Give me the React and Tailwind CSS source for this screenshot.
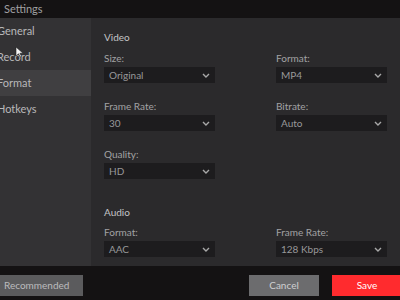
import React from "react";

function Chevron() {
  return (
    <svg width="8" height="5" viewBox="0 0 8 5" className="shrink-0">
      <path d="M1 1 L4 4 L7 1" fill="none" stroke="#a8a8a8" strokeWidth="1.4" />
    </svg>
  );
}

function Field({ label, value }) {
  return (
    <div className="flex flex-col">
      <div className="h-[12px] leading-[12px] text-[10px] text-[#a2a2a4]">{label}</div>
      <div className="mt-[3px] h-[16px] bg-[#1d1c1e] flex items-center justify-between pl-[5px] pr-[5px]">
        <span className="text-[10px] leading-[16px] text-[#98989a]">{value}</span>
        <Chevron />
      </div>
    </div>
  );
}

export default function App() {
  const items = ["General", "Record", "Format", "Hotkeys"];
  return (
    <div
      className="relative w-[400px] h-[300px] overflow-hidden bg-[#141213] flex flex-col"
      style={{ fontFamily: 'Lato, "Noto Sans", sans-serif' }}
    >
      <div className="h-[18px] shrink-0 flex items-center pl-[4px] text-[11px] text-[#a0a0a2]">
        Settings
      </div>
      <div className="h-[248px] shrink-0 flex">
        <div className="w-[91px] shrink-0 bg-[#333234] flex flex-col">
          {items.map((it) => (
            <div
              key={it}
              className={
                "h-[26px] flex items-center -ml-[3px] text-[11px] text-[#b8b8ba] " +
                (it === "Format" ? "bg-[#403f41]" : "")
              }
            >
              {it}
            </div>
          ))}
        </div>
        <div className="flex-1 bg-[#2b2a2c] pl-[13px] pr-[12px] pt-[12px] flex flex-col">
          <div className="h-[14px] leading-[14px] text-[10px] text-[#c4c4c6]">Video</div>
          <div className="mt-[8px] grid grid-cols-[111px_111px] gap-x-[61px] gap-y-[17px]">
            <Field label="Size:" value="Original" />
            <Field label="Format:" value="MP4" />
            <Field label="Frame Rate:" value="30" />
            <Field label="Bitrate:" value="Auto" />
            <Field label="Quality:" value="HD" />
            <div />
          </div>
          <div className="mt-[26px] h-[14px] leading-[14px] text-[10px] text-[#c4c4c6]">Audio</div>
          <div className="mt-[7px] grid grid-cols-[111px_111px] gap-x-[61px]">
            <Field label="Format:" value="AAC" />
            <Field label="Frame Rate:" value="128 Kbps" />
          </div>
        </div>
      </div>
      <div className="flex-1 flex items-start pt-[9px]">
        <div className="w-[83px] h-[21px] bg-[#5b5b5d] flex items-center pl-[4px] text-[10px] text-[#bcbcbe]">
          Recommended
        </div>
        <div className="ml-auto w-[70px] h-[21px] bg-[#6c6c6e] flex items-center justify-center text-[10px] text-[#cfcfd1]">
          Cancel
        </div>
        <div className="ml-[13px] -mr-[2px] w-[70px] h-[21px] bg-[#ff2b2e] flex items-center justify-center text-[10px] text-white">
          Save
        </div>
      </div>
      <svg className="absolute left-[15px] top-[46px]" width="9" height="12" viewBox="0 0 9 12">
        <path d="M1 1 L1 10 L3.5 7.8 L5.2 11 L6.5 10.3 L4.9 7.3 L8 7.2 Z" fill="#f4f4f4" stroke="#222" strokeWidth="0.6" />
      </svg>
    </div>
  );
}
